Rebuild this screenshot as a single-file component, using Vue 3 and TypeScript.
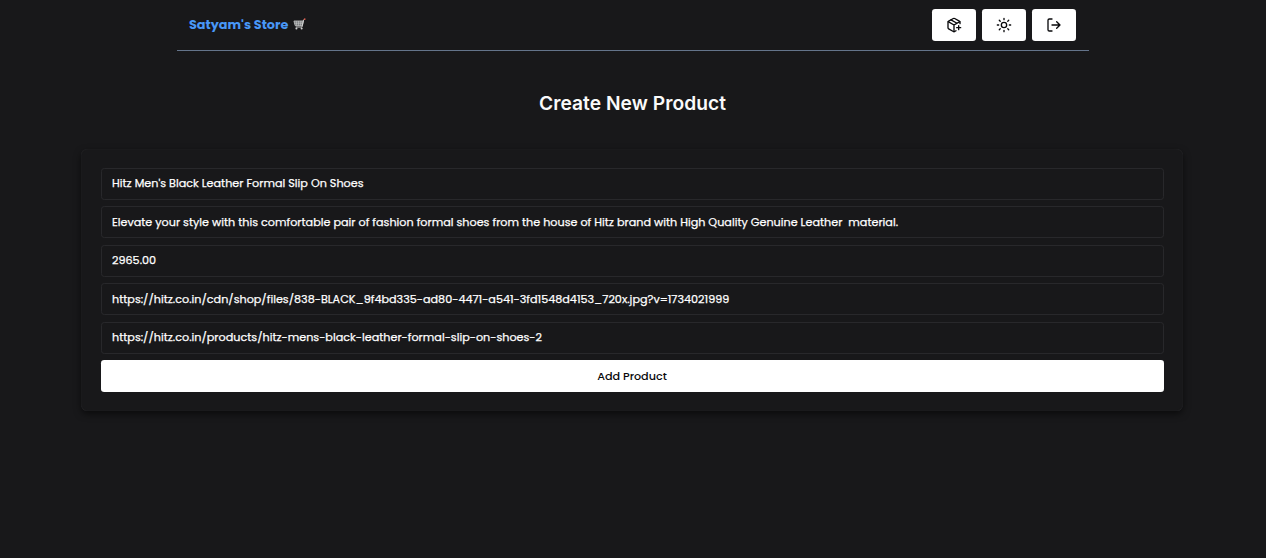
<script setup lang="ts">
import { ref } from 'vue'

interface Field {
  name: string
  value: string
}

const fields = ref<Field[]>([
  { name: 'name', value: "Hitz Men's Black Leather Formal Slip On Shoes" },
  {
    name: 'description',
    value:
      'Elevate your style with this comfortable pair of fashion formal shoes from the house of Hitz brand with High Quality Genuine Leather  material.',
  },
  { name: 'price', value: '2965.00' },
  { name: 'image', value: 'https://hitz.co.in/cdn/shop/files/838-BLACK_9f4bd335-ad80-4471-a541-3fd1548d4153_720x.jpg?v=1734021999' },
  { name: 'link', value: 'https://hitz.co.in/products/hitz-mens-black-leather-formal-slip-on-shoes-2' },
])
</script>

<template>
  <div class="page">
    <header class="navbar">
      <a class="brand">
        <span class="brand-name">Satyam's Store</span>
        <svg class="cart" viewBox="0 0 14 14" fill="none">
          <path d="M1 3.2h10.2l-1.1 5H2.3z" fill="#77797b" stroke="#cfd0d0" stroke-width=".8" />
          <path d="M3.5 3.2l.5 5M6 3.2v5M8.5 3.2l-.4 5M1.6 5.6h9" stroke="#cfd0d0" stroke-width=".6" />
          <path d="M12.8 1.1l-1.4.9-1.7 7.7H3" stroke="#d5d5d5" stroke-width="1" />
          <path d="M13.4.9l-1.6.8" stroke="#ef5746" stroke-width="1.3" />
          <circle cx="3.7" cy="11.4" r="1.1" fill="#d0d0d0" />
          <circle cx="9.3" cy="11.4" r="1.1" fill="#d0d0d0" />
        </svg>
      </a>
      <nav class="actions">
        <button class="btn icon-btn" aria-label="Create product">
          <svg class="icon" viewBox="0 0 24 24">
            <path d="M16 16h6M19 13v6" />
            <path d="M21 10V8a2 2 0 0 0-1-1.73l-7-4a2 2 0 0 0-2 0l-7 4A2 2 0 0 0 3 8v8a2 2 0 0 0 1 1.73l7 4a2 2 0 0 0 2 0l2-1.14" />
            <path d="M7.5 4.27l9 5.15M3.29 7L12 12l8.71-5M12 22V12" />
          </svg>
        </button>
        <button class="btn icon-btn" aria-label="Toggle theme">
          <svg class="icon" viewBox="0 0 24 24">
            <circle cx="12" cy="12" r="4" />
            <path d="M12 2v2M12 20v2M4.93 4.93l1.41 1.41M17.66 17.66l1.41 1.41M2 12h2M20 12h2M6.34 17.66l-1.41 1.41M19.07 4.93l-1.41 1.41" />
          </svg>
        </button>
        <button class="btn icon-btn" aria-label="Log out">
          <svg class="icon" viewBox="0 0 24 24">
            <path d="M9 21H5a2 2 0 0 1-2-2V5a2 2 0 0 1 2-2h4M16 17l5-5-5-5M21 12H9" />
          </svg>
        </button>
      </nav>
    </header>
    <h1 class="title">Create New Product</h1>
    <form class="card" @submit.prevent>
      <input v-for="f in fields" :key="f.name" v-model="f.value" class="field" :name="f.name" />
      <button class="btn submit">Add Product</button>
    </form>
  </div>
</template>

<style>
html,
body {
  background: #18181a;
}
</style>

<style scoped>
.page {
  min-height: 558px;
  overflow: hidden;
  background: #18181a;
  color: #fafafa;
  font-family: Poppins, Inter, sans-serif;
}
.navbar {
  box-sizing: border-box;
  width: 912px;
  height: 51px;
  margin: 0 auto;
  padding: 0 13px 1px 12px;
  border-bottom: 1px solid #64748b;
  display: flex;
  align-items: center;
  justify-content: space-between;
}
.brand {
  display: flex;
  align-items: center;
  gap: 5px;
}
.brand-name {
  color: #4897f7;
  font-size: 12.8px;
  font-weight: 700;
}
.cart {
  width: 13px;
  height: 13px;
}
.actions {
  display: flex;
  gap: 6px;
}
.btn {
  height: 32px;
  padding: 0;
  border: 0;
  border-radius: 3.2px;
  background: #fff;
  color: #09090b;
  display: flex;
  align-items: center;
  justify-content: center;
}
.icon-btn {
  width: 44px;
}
.icon {
  width: 16px;
  height: 16px;
  fill: none;
  stroke: currentColor;
  stroke-width: 2;
  stroke-linecap: round;
  stroke-linejoin: round;
}
.title {
  margin: 38px 1px 32px 0;
  text-align: center;
  font: 600 19.2px/28px Inter, sans-serif;
  letter-spacing: 0.05px;
}
.card {
  box-sizing: border-box;
  width: 1102px;
  margin: 0 83px 0 81px;
  padding: 19px 19.5px;
  border-radius: 6.4px;
  box-shadow: 0 3px 7px rgba(0, 0, 0, 0.55), inset 0 0 1px #343438;
  display: flex;
  flex-direction: column;
  gap: 6.4px;
}
.field {
  box-sizing: border-box;
  width: 100%;
  height: 32px;
  padding: 0 10px 1px 10.5px;
  border: 1px solid #28282b;
  border-radius: 3.2px;
  outline: 0;
  background: transparent;
  color: #fff;
  font: 400 11.2px Poppins, Inter, sans-serif;
  letter-spacing: 0.004px;
  -webkit-text-stroke: 0.25px currentColor;
}
.field:nth-child(even) {
  padding-bottom: 0;
}
.submit {
  padding-top: 1px;
  font: 500 11.2px Poppins, Inter, sans-serif;
}
</style>
